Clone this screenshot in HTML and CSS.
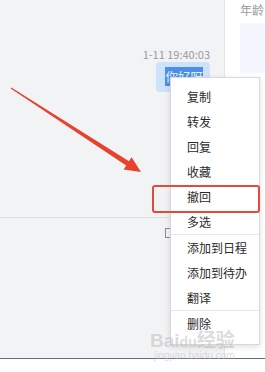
FILE: index.html
```html
<!DOCTYPE html>
<html lang="zh-CN">
<head>
    <meta charset="UTF-8">
    <meta name="viewport" content="width=device-width, initial-scale=1.0">
    <title>聊天</title>
    <link rel="stylesheet" href="styles.css">
</head>
<body>
    <div class="app">
        <div class="chat">
            <div class="messages">
                <div class="time">1-11 19:40:03</div>
                <div class="bubble"><span class="sel">你好呀</span></div>
            </div>
            <div class="input-area">
                <div class="tools">
                    <span class="tool-box"></span>
                </div>
            </div>
        </div>
        <div class="side">
            <div class="side-label">年龄</div>
            <div class="side-box"></div>
        </div>
    </div>
    <div class="footer"></div>

    <!-- right click menu -->
    <ul class="menu">
        <li>复制</li>
        <li>转发</li>
        <li>回复</li>
        <li>收藏</li>
        <li>撤回</li>
        <li>多选</li>
        <li class="sep"></li>
        <li>添加到日程</li>
        <li>添加到待办</li>
        <li>翻译</li>
        <li class="sep"></li>
        <li>删除</li>
    </ul>

    <!-- annotations -->
    <div class="mark"></div>
    <svg class="arrow" width="265" height="372" viewBox="0 0 265 372">
        <polygon fill="#e8412c" points="11.3,87.5 129,161.2 131.6,157.2 141,172 123.6,169.4 126.2,165.4 10.7,88.5"/>
    </svg>
    <div class="watermark">
        <div class="wm-big">Bai<span class="wm-du">du</span>经验</div>
        <div class="wm-small">jingyan.baidu.com</div>
    </div>
</body>
</html>
```

FILE: styles.css
```css
body {
    margin: 0;
    width: 265px;
    height: 372px;
    overflow: hidden;
    font-family: "Noto Sans CJK SC", "Noto Sans", sans-serif;
    background: #ffffff;
    position: relative;
}
.app {
    display: flex;
    height: 358px;
}
.chat {
    width: 224px;
    background: #f2f3f5;
    display: flex;
    flex-direction: column;
}
.messages {
    height: 218px;
    border-bottom: 1px solid #dcdee2;
    padding: 47px 14px 0 0;
    box-sizing: border-box;
    display: flex;
    flex-direction: column;
    align-items: flex-end;
}
.time {
    font-size: 11px;
    line-height: 14px;
    color: #9a9a9a;
    margin-bottom: 1px;
}
.bubble {
    background: #cfe2fb;
    border-radius: 4px;
    padding: 6px 7px 7px 9px;
    font-size: 12.5px;
    line-height: 17px;
}
.sel {
    background: #4b8fe6;
    color: #e6efff;
}
.input-area {
    flex: 1;
}
.tools {
    padding: 10px 0 0 165px;
}
.tool-box {
    display: block;
    width: 9px;
    height: 10px;
    border: 1px solid #8a8d93;
    box-sizing: border-box;
}
.side {
    flex: 1;
    border-left: 1px solid #e3e5e8;
    background: #ffffff;
    padding: 3px 0 0 15px;
}
.side-label {
    font-size: 12px;
    line-height: 14px;
    color: #9b9b9b;
}
.side-box {
    margin-top: 6px;
    height: 50px;
    background: #f4f8fe;
}
.footer {
    border-top: 1px solid #5f6f82;
    height: 13px;
    background: #ffffff;
}
.menu {
    position: absolute;
    left: 170px;
    top: 77px;
    width: 90px;
    margin: 0;
    padding: 6px 0 8px;
    list-style: none;
    background: #ffffff;
    border: 1px solid #d6d8dc;
    box-sizing: border-box;
    box-shadow: 0 2px 6px rgba(0,0,0,0.12);
}
.menu li {
    height: 17px;
    line-height: 17px;
    padding: 4px 0 4px 16px;
    font-size: 12px;
    color: #2b2b2b;
}
.menu li.sep {
    height: 1px;
    padding: 0;
    background: #e4e6e9;
}
.mark {
    position: absolute;
    left: 152px;
    top: 185px;
    width: 108px;
    height: 28px;
    border: 2px solid #e04b3b;
    border-radius: 3px;
    box-sizing: border-box;
}
.arrow {
    position: absolute;
    left: 0;
    top: 0;
}
.watermark {
    position: absolute;
    left: 150px;
    top: 333px;
    color: rgba(190,190,190,0.55);
    font-family: "Liberation Sans", "Noto Sans CJK SC", sans-serif;
}
.wm-big {
    font-size: 19px;
    line-height: 15px;
    font-weight: bold;
}
.wm-du {
    font-size: 14px;
}
.wm-small {
    font-size: 10px;
    line-height: 12px;
    padding-left: 4px;
}
```
